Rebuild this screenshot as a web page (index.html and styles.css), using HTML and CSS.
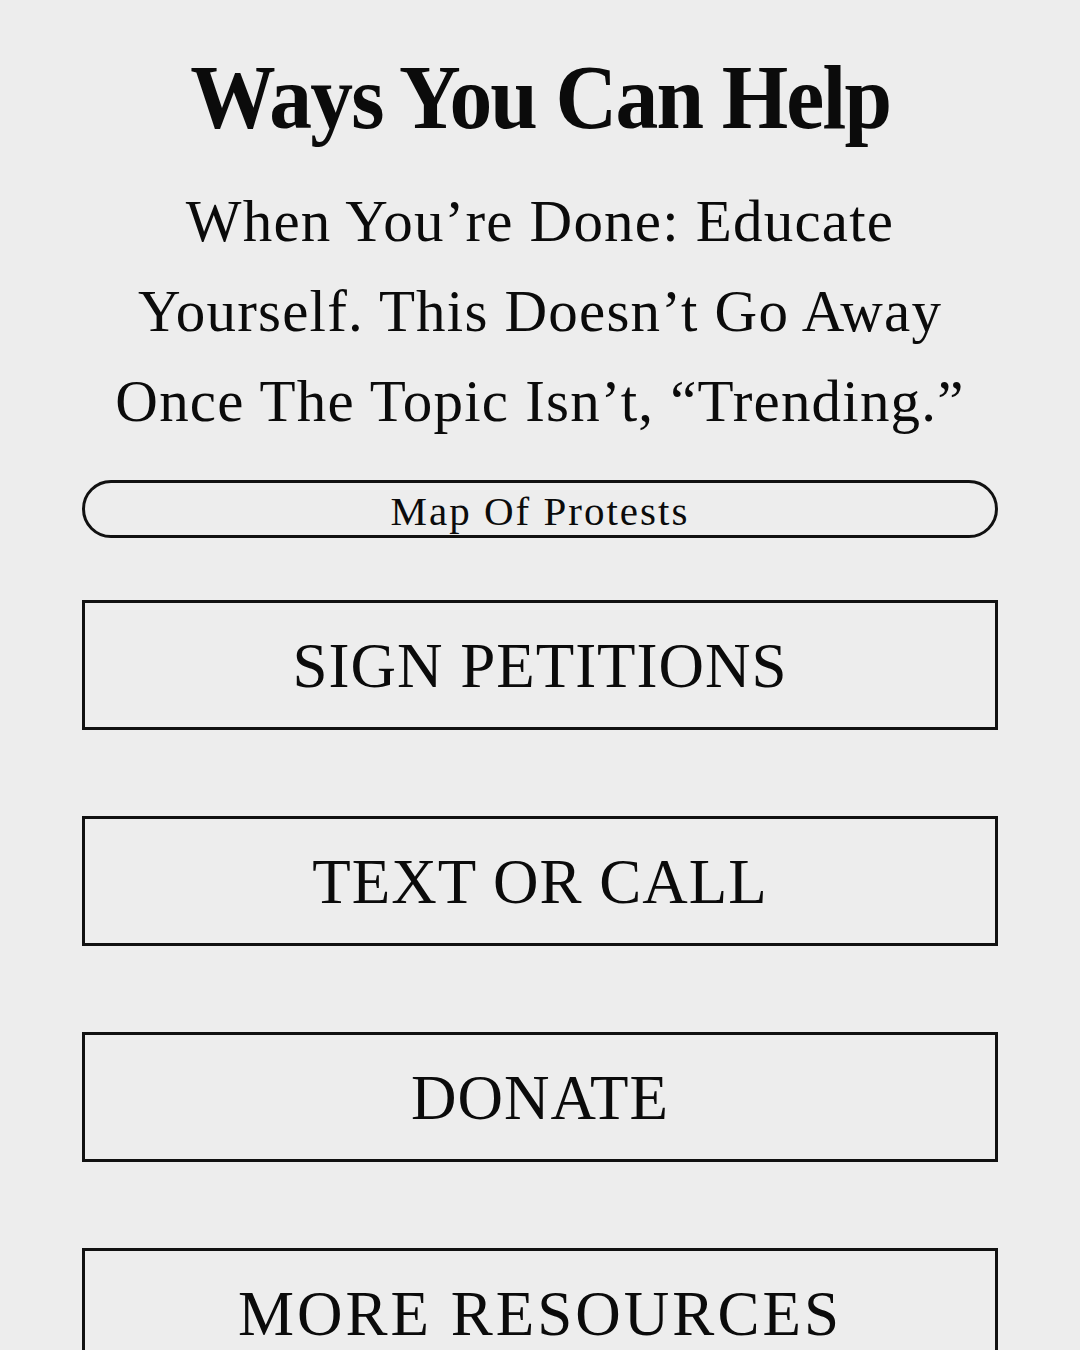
FILE: index.html
```html
<!DOCTYPE html>
<html>
<head>
<meta charset="utf-8">
<link rel="stylesheet" href="styles.css">
</head>
<body>
<main class="page">
  <h1 class="title"><span class="title-text">Ways You Can Help</span></h1>
  <p class="intro">When You’re Done: Educate<br>Yourself. This Doesn’t Go Away<br>Once The Topic Isn’t, “Trending.”</p>
  <a class="pill">Map Of Protests</a>
  <div class="buttons">
    <a class="box">SIGN PETITIONS</a>
    <a class="box">TEXT OR CALL</a>
    <a class="box">DONATE</a>
    <a class="box box-wide">MORE RESOURCES</a>
  </div>
</main>
</body>
</html>
```
FILE: styles.css
```css
html, body {
  margin: 0;
  padding: 0;
  background: #ededed;
  color: #0b0b0b;
  font-family: "Liberation Serif", "DejaVu Serif", serif;
  overflow: hidden;
}
.page {
  padding: 52px 82px 0 82px;
  display: flex;
  flex-direction: column;
  align-items: stretch;
}
.page > * {
  flex-shrink: 0;
}
.title {
  margin: 0;
  text-align: center;
  font-size: 92px;
  font-weight: 700;
  line-height: 90px;
  letter-spacing: -2px;
}
.title-text {
  display: inline-block;
  transform: scaleX(0.93);
}
.intro {
  margin: 34px 0 0 0;
  text-align: center;
  font-size: 59px;
  line-height: 90px;
  letter-spacing: 1.2px;
}
.pill {
  margin-top: 34px;
  height: 58px;
  box-sizing: border-box;
  border: 3px solid #111;
  border-radius: 30px;
  display: flex;
  align-items: center;
  justify-content: center;
  padding-top: 3px;
  font-size: 41px;
  letter-spacing: 2px;
}
.buttons {
  margin-top: 62px;
  display: flex;
  flex-direction: column;
  gap: 86px;
}
.box {
  flex-shrink: 0;
  height: 130px;
  box-sizing: border-box;
  border: 3px solid #111;
  display: flex;
  align-items: center;
  justify-content: center;
  padding-top: 2px;
  font-size: 63px;
  letter-spacing: 1px;
}
.box-wide {
  letter-spacing: 3px;
}
```
